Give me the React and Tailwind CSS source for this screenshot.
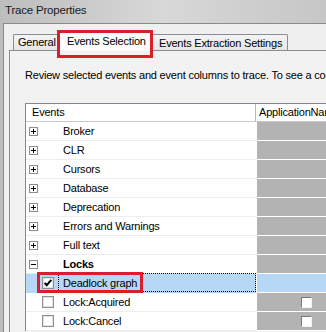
import React from 'react';

const rows = [
  { kind: 'plus', label: 'Broker' },
  { kind: 'plus', label: 'CLR' },
  { kind: 'plus', label: 'Cursors' },
  { kind: 'plus', label: 'Database' },
  { kind: 'plus', label: 'Deprecation' },
  { kind: 'plus', label: 'Errors and Warnings' },
  { kind: 'plus', label: 'Full text' },
  { kind: 'minus', label: 'Locks' },
  { kind: 'check', label: 'Deadlock graph', checked: true, selected: true },
  { kind: 'check', label: 'Lock:Acquired', box: true },
  { kind: 'check', label: 'Lock:Cancel', box: true },
];

function Expander({ open }) {
  return (
    <svg width="9" height="9" viewBox="0 0 9 9" className="block">
      <rect x="0.5" y="0.5" width="8" height="8" fill="#fff" stroke="#8c8c8c" />
      <path d="M2 4.5h5" stroke="#000" strokeWidth="1" />
      {!open && <path d="M4.5 2v5" stroke="#000" strokeWidth="1" />}
    </svg>
  );
}

function CheckBox({ checked }) {
  return (
    <svg width="12" height="12" viewBox="0 0 12 12" className="block">
      <rect x="0.5" y="0.5" width="11" height="11" fill="#fff" stroke="#8e8f8f" />
      <rect x="1.5" y="1.5" width="9" height="9" fill="none" stroke="#e2e2e2" />
      {checked && <path d="M2.6 5.8l2.1 2.4 4.6-5.4" fill="none" stroke="#000" strokeWidth="2" />}
    </svg>
  );
}

export default function App() {
  return (
    <div className="w-[326px] h-[332px] overflow-hidden bg-gradient-to-r from-[#bdbdbd] via-[#d8d8d8] to-[#c6c6c6] font-['Liberation_Sans',Arial,sans-serif] text-[11px] tracking-[-0.2px] text-black">
      <div className="h-[23px] pl-[5px] pt-[3px] text-[11.5px] leading-[14px] text-[#1a1a1a]">Trace Properties</div>

      <div className="flex h-[309px] pl-[3px]">
        <div className="flex-1 bg-[#f0f0f0] border-l border-t border-[#8a8a8a] pl-[5px] pt-[7px]">
          {/* tabs */}
          <div className="flex items-end h-[19px]">
            <div className="ml-[4px] w-[45px] h-[16px] border-t border-l border-[#898c95] rounded-tl-[2px] bg-gradient-to-b from-[#f4f4f4] to-[#e6e6e6] pl-[4px] leading-[15px]">
              General
            </div>
            <div className="relative z-10 w-[94px] h-[20px] mb-[-1px] border-t border-l border-r border-[#898c95] rounded-t-[2px] bg-[#fcfcfc] pl-[8px] leading-[18px]">
              Events Selection
              <div className="absolute left-[-2px] top-[-2px] w-[96px] h-[28px] border-[3px] border-[#d91f2b]" />
            </div>
            <div className="w-[136px] h-[16px] border-t border-r border-[#898c95] rounded-tr-[2px] bg-gradient-to-b from-[#f4f4f4] to-[#e6e6e6] pl-[7px] leading-[16px] whitespace-nowrap">
              Events Extraction Settings
            </div>
          </div>

          {/* panel */}
          <div className="h-[300px] border-l border-t border-[#898c95] bg-[#f2f2f2] pl-[15px] pt-[17px]">
            <div className="h-[14px] leading-[14px] whitespace-nowrap overflow-hidden">
              Review selected events and event columns to trace. To see a complete list, select the show all options.
            </div>

            <div className="mt-[21px] border-l border-t border-[#828790] bg-white">
              <div className="flex h-[18px] border-b border-[#c9c9c9]">
                <div className="w-[230px] border-r border-[#b8b8b8] pl-[6px] leading-[17px]">Events</div>
                <div className="flex-1 border-l border-white pl-[2px] leading-[17px] whitespace-nowrap overflow-hidden">ApplicationName</div>
              </div>

              {rows.map((r) => (
                <div key={r.label} className={`flex h-[19px] ${r.selected ? 'bg-[#b6d8f6]' : ''}`}>
                  <div className={`relative w-[230px] flex items-center border-b ${r.selected ? 'border-[#b6d8f6]' : 'border-[#ececec]'}`}>
                    {r.kind === 'check' ? (
                      <>
                        <div className="ml-[16px] w-[21px]"><CheckBox checked={r.checked} /></div>
                        <span className="whitespace-nowrap">{r.label}</span>
                      </>
                    ) : (
                      <>
                        <div className="ml-[3px] w-[34px]"><Expander open={r.kind === 'minus'} /></div>
                        <span className={r.kind === 'minus' ? 'font-bold' : ''}>{r.label}</span>
                      </>
                    )}
                    {r.selected && (
                      <>
                        <div className="absolute left-[32px] right-0 top-[-1px] bottom-[0px] border border-dotted border-black" />
                        <div className="absolute left-[11px] top-[-2px] w-[106px] h-[21px] border-[3px] border-[#d91f2b]" />
                      </>
                    )}
                  </div>
                  <div className="w-[1px] bg-white" />
                  <div className={`flex-1 flex items-center border-b border-white ${r.selected ? 'bg-[#b6d8f6]' : 'bg-[#b3b3b3]'}`}>
                    {r.box && (
                      <div className="ml-[44px] w-[11px] h-[11px] bg-white border-t border-l border-[#7a7a7a] border-r-[#f2f2f2] border-b-[#f2f2f2] border-r border-b" />
                    )}
                  </div>
                </div>
              ))}
            </div>
          </div>
        </div>
      </div>
    </div>
  );
}
